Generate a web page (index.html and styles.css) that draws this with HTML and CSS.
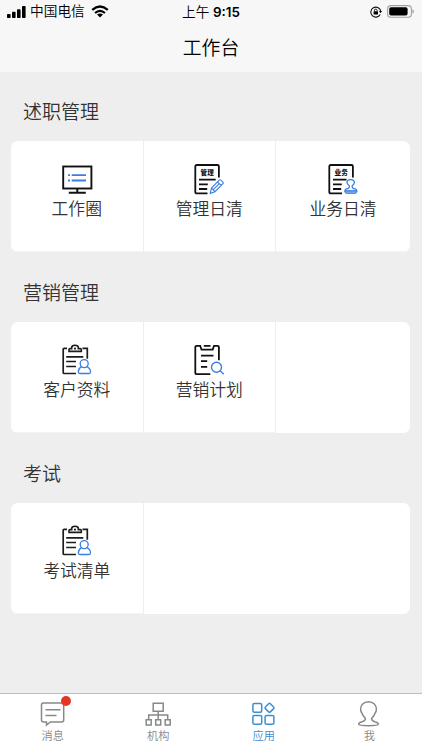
FILE: index.html
```html
<!DOCTYPE html>
<html lang="zh-CN">
<head>
  <meta charset="UTF-8" />
  <meta name="viewport" content="width=device-width, initial-scale=1.0"/>
  <title>工作台</title>
  <link rel="stylesheet" href="styles.css">
</head>
<body>
  <!-- shared icon for clipboard with person -->
  <svg class="defs" width="0" height="0">
    <symbol id="icon-client" viewBox="0 0 32 32">
      <g fill="none" stroke="#1c1c1c" stroke-width="1.7">
        <path d="M6 4.3H3.2Q2.2 4.3 2.2 5.3V28.5Q2.2 29.5 3.2 29.5H15M21.5 4.3H26.3V14.8"/>
        <path d="M8 7.4V5.6Q8 4.6 9 4.6H10.7V3.6Q10.7 1.3 14 1.3T17.3 3.6V4.6H19.3Q20.3 4.6 20.3 5.6V7.4Z" stroke-width="1.6"/>
        <path d="M5.2 12.8H22.3M5.2 17.5H15M5.2 22.5H15"/>
      </g>
      <circle cx="14" cy="4.6" r="1.1" fill="#1c1c1c"/>
      <g fill="none" stroke="#3b7fe0" stroke-width="1.3">
        <circle cx="23.2" cy="19.6" r="4"/>
        <path d="M20.4 22.6Q17.3 24.5 17.3 28Q17.3 29.5 18.8 29.5H28Q29.5 29.5 29.5 28Q29.5 24.5 26 22.6"/>
      </g>
    </symbol>
  </svg>

  <div class="app">
    <header class="header">
      <div class="status-bar">
        <div class="status-left">
          <svg class="signal" width="19" height="12" viewBox="0 0 19 12">
            <rect x="0" y="8" width="3.6" height="4" rx=".8"/>
            <rect x="5" y="5.7" width="3.6" height="6.3" rx=".8"/>
            <rect x="10" y="3.2" width="3.6" height="8.8" rx=".8"/>
            <rect x="15" y="0" width="3.6" height="12" rx=".8"/>
          </svg>
          <span class="carrier">中国电信</span>
          <svg class="wifi" width="18" height="13" viewBox="0 0 18 13">
            <path d="M1.2 4.8Q9 -1.8 16.8 4.8M4 8Q9 3.6 14 8" fill="none" stroke="#000" stroke-width="2.2"/>
            <path d="M6 9.6Q9 7.3 12 9.6L9 12.6Z"/>
          </svg>
        </div>
        <div class="status-time">上午 <b>9:15</b></div>
        <div class="status-right">
          <svg width="12" height="12" viewBox="0 0 12 12">
            <path d="M10.2 8.6A5 5 0 1 1 10.7 5" fill="none" stroke="#111" stroke-width="1.1"/>
            <path d="M9 5H12L10.6 7.2Z"/>
            <rect x="3.6" y="5.2" width="4.4" height="3.3" rx=".5"/>
            <path d="M4.5 5.3V4.3Q4.5 3.1 5.8 3.1T7.1 4.3V5.3" fill="none" stroke="#111" stroke-width=".9"/>
          </svg>
          <svg class="battery" width="28" height="13" viewBox="0 0 28 13">
            <rect x=".6" y=".6" width="23.8" height="11.6" rx="3.3" fill="none" stroke="#a0a0a0" stroke-width="1.1"/>
            <rect x="2.2" y="2.2" width="18.4" height="8.4" rx="1.8"/>
            <path d="M25.5 4.3Q27 5 27 6.4T25.5 8.5Z" fill="#a0a0a0"/>
          </svg>
        </div>
      </div>
      <h1 class="title">工作台</h1>
    </header>

    <main class="content">
      <section class="section">
        <h2 class="section-title">述职管理</h2>
        <div class="card">
          <div class="item">
            <svg class="item-icon" viewBox="0 0 32 32">
              <g fill="none" stroke="#111">
                <rect x="2.2" y="3.5" width="28.2" height="22" stroke-width="1.9"/>
                <path d="M16.3 26V29" stroke-width="2"/>
                <path d="M7.8 29.7H24.8" stroke-width="1.9"/>
              </g>
              <path d="M7 12.2H9M10.7 12.2H25M7 17.5H9M10.7 17.5H25" stroke="#3b7fe0" stroke-width="1.8"/>
            </svg>
            <span class="item-label">工作圈</span>
          </div>
          <div class="item">
            <svg class="item-icon" viewBox="0 0 32 32">
              <path d="M14.5 30.4H3.8Q2.3 30.4 2.3 28.9V3.5Q2.3 2 3.8 2H24.4Q25.9 2 25.9 3.5V14.5M6 16.6H22.7M6 21.4H14.8M6 26H14.2" fill="none" stroke="#111" stroke-width="1.8"/>
              <text class="icon-text" x="14.2" y="12">管理</text>
              <path d="M17.2 30.3L18.5 25L26.2 17.1Q27 16.4 27.8 17.1L30 19.2Q30.7 20 30 20.7L22 28.7ZM18.5 25L22 28.7M24.5 18.8L28.2 22.5M20.3 26.7L26 20.8" fill="none" stroke="#3b7fe0" stroke-width="1.1"/>
            </svg>
            <span class="item-label">管理日清</span>
          </div>
          <div class="item">
            <svg class="item-icon" viewBox="0 0 32 32">
              <path d="M15 30.4H3.8Q2.3 30.4 2.3 28.9V3.5Q2.3 2 3.8 2H24.4Q25.9 2 25.9 3.5V14.5M6 16.6H19.5M6 21.4H14.8M6 26H14.2" fill="none" stroke="#111" stroke-width="1.8"/>
              <text class="icon-text" x="14.2" y="12">业务</text>
              <path d="M22.3 22.8Q20 21 20 19.5Q20 16.7 23.7 16.7T27.4 19.5Q27.4 21 25.2 22.8Q24.8 25.7 28 25.9Q29.6 26.1 29.8 28H17.8Q18 26.1 19.6 25.9Q22.8 25.7 22.3 22.8Z" fill="none" stroke="#3b7fe0" stroke-width="1.3"/>
              <path d="M18 28H29.6V29Q29.6 30.4 28 30.4H19.6Q18 30.4 18 29Z" fill="#7faaf0" stroke="#3b7fe0" stroke-width=".9"/>
            </svg>
            <span class="item-label">业务日清</span>
          </div>
        </div>
      </section>

      <section class="section">
        <h2 class="section-title">营销管理</h2>
        <div class="card">
          <div class="item">
            <svg class="item-icon"><use href="#icon-client"/></svg>
            <span class="item-label">客户资料</span>
          </div>
          <div class="item">
            <svg class="item-icon" viewBox="0 0 32 32">
              <path d="M17.3 30.2H3.8Q2.3 30.2 2.3 28.7V3Q2.3 1.8 3.5 1.8H7.2L8.5 5.6H19.7L21 1.8H24.7Q25.9 1.8 25.9 3V16.3M10.8 1.8H17.5M8 11.6H20.5M8 17.2H14.2M8 22.9H14.2" fill="none" stroke="#111" stroke-width="1.8"/>
              <g fill="none" stroke="#3b7fe0" stroke-width="1.4">
                <circle cx="23.5" cy="23.2" r="5"/>
                <path d="M27.1 26.8L30.8 30.3"/>
              </g>
            </svg>
            <span class="item-label">营销计划</span>
          </div>
        </div>
      </section>

      <section class="section">
        <h2 class="section-title">考试</h2>
        <div class="card">
          <div class="item">
            <svg class="item-icon"><use href="#icon-client"/></svg>
            <span class="item-label">考试清单</span>
          </div>
        </div>
      </section>
    </main>

    <nav class="tab-bar">
      <div class="tab">
        <div class="tab-icon">
          <svg width="28" height="28" viewBox="0 0 28 28">
            <path d="M4.5 4H22.7Q24.7 4 24.7 6V21Q24.7 23 22.7 23H11.5L7.5 26V23H4.5Q2.5 23 2.5 21V6Q2.5 4 4.5 4ZM6.5 10.7H21.5M6.5 16.4H17.5"/>
          </svg>
          <span class="badge"></span>
        </div>
        <span>消息</span>
      </div>
      <div class="tab">
        <div class="tab-icon">
          <svg width="28" height="28" viewBox="0 0 28 28">
            <path d="M9.2 4.2H19.2V12.2H9.2ZM14.2 12.2V21M4.7 20.5V16H23.7V20.5M2.2 20.8H7.2V26H2.2ZM11.7 20.8H16.7V26H11.7ZM21.2 20.8H26.2V26H21.2Z"/>
          </svg>
        </div>
        <span>机构</span>
      </div>
      <div class="tab active">
        <div class="tab-icon">
          <svg width="28" height="28" viewBox="0 0 28 28">
            <rect x="2.9" y="4.5" width="8.8" height="8.8" rx="1.5"/>
            <rect x="2.9" y="16.5" width="8.8" height="8.8" rx="1.5"/>
            <rect x="15.1" y="16.5" width="8.8" height="8.8" rx="1.5"/>
            <rect x="16" y="5.3" width="7" height="7" rx="1.2" transform="rotate(45 19.5 8.8)"/>
          </svg>
        </div>
        <span>应用</span>
      </div>
      <div class="tab">
        <div class="tab-icon">
          <svg width="28" height="28" viewBox="0 0 28 28">
            <path d="M13.5 2.8C8.5 2.8 5.6 6.4 5.6 10.3C5.6 12.3 6.2 13.3 7 14.2C7.9 17 9.5 18.2 10.4 19.4C10.7 21.5 9.7 22 7.2 22.7C4.7 23.3 3.7 24 3.7 25.3C3.7 26.3 7.2 26.7 13.5 26.7S23.3 26.3 23.3 25.3C23.3 24 22.3 23.3 19.8 22.7C17.3 22 16.3 21.5 16.6 19.4C17.5 18.2 19.1 17 20 14.2C20.8 13.3 21.4 12.3 21.4 10.3C21.4 6.4 18.5 2.8 13.5 2.8Z"/>
          </svg>
        </div>
        <span>我</span>
      </div>
    </nav>
  </div>
</body>
</html>
```

FILE: styles.css
```css
* { box-sizing: border-box; margin: 0; padding: 0; }
body {
  font-family: "Liberation Sans", "Noto Sans CJK SC", sans-serif;
  background: #eee; color: #333; font-weight: 350;
}
svg { display: block; flex: none; }
.defs { position: absolute; }
.app { display: flex; flex-direction: column; height: 750px; overflow: hidden; }

/* header */
.header { height: 72px; background: #f7f7f7; color: #000; }
.status-bar {
  display: grid; grid-template-columns: 1fr auto 1fr; align-items: center;
  height: 23px; padding: 0 7px;
}
.status-left { display: flex; align-items: center; }
.carrier { margin: 1px 6px 0 4px; font-size: 13.7px; line-height: 20px; }
.status-time { padding-top: 1px; font-size: 13.6px; line-height: 20px; }
.status-time b { font-family: Inter, sans-serif; font-size: 13.4px; font-weight: 600; }
.status-right { display: flex; align-items: center; justify-content: flex-end; gap: 5px; }
.title { font-size: 18.8px; font-weight: 350; line-height: 52px; text-align: center; }

/* app groups */
.content { flex: 1; padding: 0 12px 0 11px; }
.section { height: 181px; }
.section-title {
  height: 68.5px; padding: 27px 0 0 12px;
  font-size: 19px; font-weight: 350; line-height: 28px;
}
.card {
  display: grid; grid-template-columns: 132.5px 132.5px 1fr;
  height: 111.5px; background: #fff; border-radius: 7px; overflow: hidden;
}
.item {
  display: flex; flex-direction: column; align-items: center;
  padding-top: 22.5px; border-right: 1px solid #eee; border-bottom: 1px solid #f3f3f3;
}
.item:nth-child(3) { border-right: none; }
.item-icon { width: 32px; height: 32px; }
.item-label { font-size: 16.8px; line-height: 30px; }
.icon-text { font-size: 6.6px; font-weight: 900; text-anchor: middle; fill: #111; }

/* bottom tabs */
.tab-bar {
  display: flex; height: 57px;
  background: #fff; border-top: 1px solid #bbb;
}
.tab {
  flex: 1; display: flex; flex-direction: column; align-items: center;
  padding-top: 5px; color: #888; font-size: 11.2px; line-height: 18px;
}
.tab-icon { position: relative; }
.tab-icon svg { fill: none; stroke: currentColor; stroke-width: 1.5; }
.tab.active { color: #3e8ed0; }
.badge {
  position: absolute; top: -3px; right: -4px;
  width: 10px; height: 10px; border-radius: 50%; background: #e63427;
}
```
